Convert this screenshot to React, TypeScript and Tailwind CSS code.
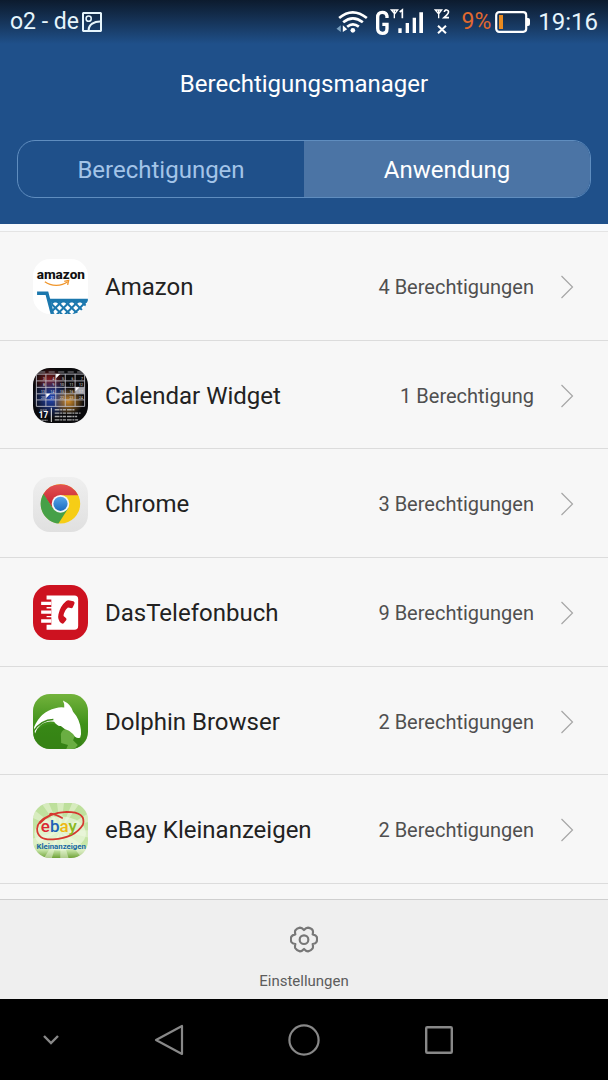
import { useState } from 'react';
import type { ReactNode } from 'react';

type AppRow = { name: string; permissions: number; icon: ReactNode };

function AmazonIcon() {
  return (
    <svg viewBox="0 0 162 162" className="size-full" aria-hidden="true">
      <defs>
        <clipPath id="amazon-basket">
          <path d="M51 117h111v45H60z" />
        </clipPath>
      </defs>
      <rect width="162" height="162" fill="#fff" />
      <text x="82" y="60" textAnchor="middle" fontSize="40" fontWeight="800" fill="#111">
        amazon
      </text>
      <path d="M35 67c18 14 49 14 67 0" fill="none" stroke="#f0962c" strokeWidth="4" />
      <path d="M92 66l13-3-3 13" fill="none" stroke="#f0962c" strokeWidth="4" />
      <path d="M12 101h29l16 61" fill="none" stroke="#1c78ae" strokeWidth="10" />
      <path d="M48 117h114v11H51z" fill="#1c78ae" />
      <g clipPath="url(#amazon-basket)" stroke="#1c78ae" strokeWidth="6">
        <path d="M18 120l48 48M42 120l48 48M66 120l48 48M90 120l48 48M114 120l48 48M138 120l48 48" />
        <path d="M66 120l-48 48M90 120l-48 48M114 120l-48 48M138 120l-48 48M162 120l-48 48M186 120l-48 48" />
      </g>
    </svg>
  );
}

function CalendarIcon() {
  const days = [3, 4, 5, 6, 7, 8, 9, 10, 11, 12, 13, 14, 15, 16, 17, 20, 21, 22, 23, 24];
  return (
    <svg viewBox="0 0 162 162" className="size-full" aria-hidden="true">
      <defs>
        <radialGradient id="cal-blue">
          <stop offset="0" stopColor="#2448b8" />
          <stop offset="1" stopColor="#2448b8" stopOpacity="0" />
        </radialGradient>
        <radialGradient id="cal-red">
          <stop offset="0" stopColor="#8c1c1c" />
          <stop offset="1" stopColor="#8c1c1c" stopOpacity="0" />
        </radialGradient>
        <radialGradient id="cal-gold">
          <stop offset="0" stopColor="#d08c2c" />
          <stop offset="1" stopColor="#d08c2c" stopOpacity="0" />
        </radialGradient>
      </defs>
      <rect width="162" height="162" fill="#0a0a0c" />
      <ellipse cx="48" cy="36" rx="46" ry="36" fill="url(#cal-red)" />
      <ellipse cx="54" cy="88" rx="56" ry="60" fill="url(#cal-blue)" />
      <ellipse cx="104" cy="98" rx="46" ry="40" fill="url(#cal-gold)" />
      <path
        d="M10 18h142M10 38h142M10 57h142M10 76h142M10 94h142M10 113h142M10 18v95M38 18v95M67 18v95M95 18v95M124 18v95M152 18v95"
        fill="none"
        stroke="#c4c4ce"
        strokeWidth="2.5"
      />
      <rect x="125" y="57" width="27" height="19" fill="#a8a8ae" />
      <path d="M68 18h12l-12 12zM39 76h12l-12 12zM125 57h12l-12 12z" fill="#fff" />
      {days.map((day, i) => (
        <text
          key={day}
          x={35 + (i % 5) * 28}
          y={35 + Math.floor(i / 5) * 19}
          textAnchor="end"
          fontSize="10"
          fill="#e4e4e8"
        >
          {day}
        </text>
      ))}
      <path d="M18 12h18M46 12h18M74 12h18M102 12h18M130 12h16" stroke="#85858c" strokeWidth="3" />
      <text x="31" y="146" textAnchor="middle" fontSize="24" fontWeight="700" fill="#fff">
        17
      </text>
      <path d="M21 124h20M19 154h24" stroke="#a0a0a4" strokeWidth="3" strokeDasharray="6 1" />
      <path d="M54 117v42" stroke="#e4e4e4" strokeWidth="3" />
      <path
        d="M64 123h60M64 133h76M64 143h66M64 153h72"
        stroke="#a8a8a8"
        strokeWidth="4"
        strokeDasharray="14 2 6 2 9 3"
      />
    </svg>
  );
}

function ChromeIcon() {
  return (
    <svg viewBox="0 0 162 162" className="size-full" aria-hidden="true">
      <defs>
        <linearGradient id="chrome-bg" x2="0" y2="1">
          <stop stopColor="#efefef" />
          <stop offset="1" stopColor="#e0e0e0" />
        </linearGradient>
        <linearGradient id="chrome-red" x2="0" y2="1">
          <stop stopColor="#e35252" />
          <stop offset="1" stopColor="#c4202c" />
        </linearGradient>
        <linearGradient id="chrome-blue" x2="0" y2="1">
          <stop stopColor="#56a5e8" />
          <stop offset="1" stopColor="#1b6cc0" />
        </linearGradient>
      </defs>
      <rect width="162" height="162" fill="url(#chrome-bg)" />
      <circle cx="81" cy="79" r="58" fill="#f6cd16" />
      <path d="M30 51a58 58 0 0 1 103 3H81L58 91z" fill="url(#chrome-red)" />
      <path d="M31 49a58 58 0 0 0 44 88l29-45-46-1z" fill="#46a047" />
      <circle cx="81" cy="79" r="26" fill="#f4f6f7" />
      <circle cx="81" cy="79" r="21" fill="url(#chrome-blue)" />
    </svg>
  );
}

function PhonebookIcon() {
  return (
    <svg viewBox="0 0 162 162" className="size-full" aria-hidden="true">
      <rect width="162" height="162" fill="#cd1220" />
      <path d="M40 31h82q11 0 11 11v79q0 11-11 11H40z" fill="#fff" />
      <path d="M36 43h18v22H36zM36 69h18v22H36zM36 95h18v22H36z" fill="#cd1220" />
      <path d="M24 49h30v10H24zM24 75h30v10H24zM24 101h30v10H24z" fill="#fff" />
      <path
        d="M104 45l15 3q5 2 3 7l-5 11q-2 3-6 2l-8-2q-12 10-13 25l7 6q3 3 1 6l-7 9q-3 4-7 1-13-10-9-27 5-24 23-39 3-2 6-2z"
        fill="#cd1220"
      />
    </svg>
  );
}

function DolphinIcon() {
  return (
    <svg viewBox="0 0 162 162" className="size-full" aria-hidden="true">
      <defs>
        <linearGradient id="dolphin-bg" x2="0" y2="1">
          <stop stopColor="#73b33c" />
          <stop offset="0.55" stopColor="#3f911a" />
          <stop offset="1" stopColor="#3b8618" />
        </linearGradient>
      </defs>
      <rect width="162" height="162" fill="url(#dolphin-bg)" />
      <path d="M0 120q30-38 70-30 50 8 73 48v24H0z" fill="#2f7d12" opacity="0.5" />
      <path d="M82 118q4-16 22-16 14 4 20 20l-6 14 14 14-10 12H98l5-12-20-6z" fill="#6aae42" />
      <path
        d="M3 98Q22 52 66 42q14-4 26-2 2-10-4-21 24 11 30 33 20 22 23 53 2 13-2 23-7 4-15-2-6-10-18-18-14-4-24-14-10 2-20-12-22-4-40 10Q10 102 6 116z"
        fill="#fff"
      />
      <path d="M2 109q22-33 58-34" fill="none" stroke="#3e8b1b" strokeWidth="4" />
    </svg>
  );
}

function EbayIcon() {
  return (
    <svg viewBox="0 0 162 162" className="size-full" aria-hidden="true">
      <defs>
        <linearGradient id="ebay-bg" x2="0" y2="1">
          <stop stopColor="#bddf9b" />
          <stop offset="0.85" stopColor="#c9e7aa" />
          <stop offset="1" stopColor="#6fa238" />
        </linearGradient>
      </defs>
      <rect width="162" height="162" fill="url(#ebay-bg)" />
      <path
        d="M81 81L-10 10v30zM81 81L10-20h28zM81 81L68-20h26zM81 81L124-20h28zM81 81L180 20v30zM81 81L180 80v26zM81 81L170 140l-20 30zM81 81L110 180H80zM81 81L50 180H22zM81 81L-20 140v-30z"
        fill="#eff8df"
        opacity="0.5"
      />
      <ellipse cx="80" cy="90" rx="76" ry="50" fill="#f2fae6" opacity="0.6" />
      <path
        d="M86 44Q47 24 50 36q-37 16-38 40 0 34 47 31 64-4 88-43 11-38-48-38Q45 29 21 59"
        fill="none"
        stroke="#d6372f"
        strokeWidth="5"
        strokeLinecap="round"
      />
      <text x="23" y="86" fontSize="50" fontWeight="500">
        <tspan fill="#dc2833">e</tspan>
        <tspan fill="#1d62b7">b</tspan>
        <tspan fill="#efb710">a</tspan>
        <tspan fill="#8bb820">y</tspan>
      </text>
      <text x="83" y="135" textAnchor="middle" fontSize="23" fontWeight="700" fill="#1768a4">
        Kleinanzeigen
      </text>
    </svg>
  );
}

const apps: AppRow[] = [
  { name: 'Amazon', permissions: 4, icon: <AmazonIcon /> },
  { name: 'Calendar Widget', permissions: 1, icon: <CalendarIcon /> },
  { name: 'Chrome', permissions: 3, icon: <ChromeIcon /> },
  { name: 'DasTelefonbuch', permissions: 9, icon: <PhonebookIcon /> },
  { name: 'Dolphin Browser', permissions: 2, icon: <DolphinIcon /> },
  { name: 'eBay Kleinanzeigen', permissions: 2, icon: <EbayIcon /> },
];

function StatusBar() {
  return (
    <div className="flex h-11 items-center justify-between bg-linear-to-b from-[#0c1b2e] to-[#1f508a] px-2.5 text-[#e6f5fc]">
      <div className="flex items-center gap-[3px] text-[23px]">
        <span>o2 - de</span>
        <svg viewBox="0 0 21 21" className="size-5" fill="none" stroke="currentColor" strokeWidth="2.2">
          <rect x="1" y="1" width="19" height="19" rx="1" />
          <circle cx="7" cy="7" r="2.7" strokeWidth="1.6" />
          <path d="M7 19c0-6 6-9 12-9" />
        </svg>
      </div>
      <div className="flex items-center">
        <svg viewBox="50 24 98 78" className="mr-1.5 h-[26px] w-[33px]" fill="none" stroke="#fff" strokeWidth="8">
          <path d="M59 51Q99 17 142 51M71 64Q100 40 130 64M83 77Q100 63 118 77" />
          <circle cx="100" cy="88" r="7" fill="#fff" stroke="none" />
          <path d="M70 73v20l13-8z" fill="#fff" stroke="none" />
          <path d="M64 73v20l-13-10z" fill="#7aa0bf" stroke="none" />
        </svg>
        <svg viewBox="165 21 147 84" className="h-7 w-[49px]">
          <path
            d="M201 51v-6q-2-11-14-11-14 0-14 15v33q0 15 14 15 14 0 14-14V70h-14"
            fill="none"
            stroke="#fff"
            strokeWidth="10"
          />
          <path d="M214 27h19l-9 12zM223 27v25" fill="none" stroke="#fff" strokeWidth="4" />
          <path d="M239 33l8-6v25" fill="none" stroke="#fff" strokeWidth="5" />
          <path d="M235 82h10v14h-10zM257 66h10v30h-10zM278 50h10v46h-10zM298 34h11v62h-11z" fill="#fff" />
        </svg>
        <svg viewBox="342 21 51 84" className="ml-2.5 h-7 w-[17px]" fill="none" stroke="#fff">
          <path d="M346 27h19l-9 12zM356 27v25" strokeWidth="4" />
          <path d="M373 33q1-7 7-6 7 1 5 8-1 4-13 15h15" strokeWidth="5" />
          <path d="M354 74l24 23M378 74l-24 23" strokeWidth="6" />
        </svg>
        <span className="ml-2.5 text-[23px] text-[#e0692f]">9%</span>
        <svg viewBox="0 0 35 22" className="ml-1 h-[22px] w-[35px]">
          <rect x="1.2" y="1.2" width="30" height="19.6" rx="3" fill="none" stroke="#fff" strokeWidth="2.2" />
          <path d="M32 7h1q2 0 2 2v4q0 2-2 2h-1z" fill="#fff" />
          <rect x="4" y="4" width="4" height="14" fill="#e88a20" />
        </svg>
        <span className="ml-2 text-2xl">19:16</span>
      </div>
    </div>
  );
}

function NavBar() {
  return (
    <nav className="flex h-[81px] items-center bg-black pr-[101px] text-[#888]">
      <button aria-label="Ausblenden" className="flex w-[101px] justify-center">
        <svg viewBox="0 0 16 10" className="h-2.5 w-4" fill="none" stroke="currentColor" strokeWidth="2.4">
          <path d="M1 1l7 7 7-7" />
        </svg>
      </button>
      <button aria-label="Zurück" className="flex flex-1 justify-center">
        <svg viewBox="0 0 30 32" className="h-8 w-[30px]" fill="none" stroke="currentColor" strokeWidth="2.2" strokeLinejoin="round">
          <path d="M28 2v28L2 16z" />
        </svg>
      </button>
      <button aria-label="Startseite" className="flex flex-1 justify-center">
        <svg viewBox="0 0 32 32" className="size-8" fill="none" stroke="currentColor" strokeWidth="2.2">
          <circle cx="16" cy="16" r="14.6" />
        </svg>
      </button>
      <button aria-label="Letzte Apps" className="flex flex-1 justify-center">
        <svg viewBox="0 0 28 28" className="size-7" fill="none" stroke="currentColor" strokeWidth="2.4">
          <rect x="1.2" y="1.2" width="25.6" height="25.6" rx="1" />
        </svg>
      </button>
    </nav>
  );
}

export default function App() {
  const [tab, setTab] = useState('Anwendung');

  return (
    <div className="flex min-h-screen flex-col bg-[#f7f7f7] font-['Roboto',sans-serif]">
      <header className="bg-[#1f508a] pb-[26px]">
        <StatusBar />
        <h1 className="pt-5 text-center text-2xl leading-10 text-white">Berechtigungsmanager</h1>
        <div
          role="tablist"
          className="mx-[17px] mt-9 flex h-[58px] overflow-hidden rounded-[18px] border border-[#5f8dbf]"
        >
          {['Berechtigungen', 'Anwendung'].map((label) => (
            <button
              key={label}
              role="tab"
              aria-selected={tab === label}
              onClick={() => setTab(label)}
              className={
                tab === label
                  ? 'flex-1 bg-[#4b74a5] pt-0.5 text-2xl text-white'
                  : 'flex-1 pt-0.5 text-2xl text-[#a3c4e8]'
              }
            >
              {label}
            </button>
          ))}
        </div>
      </header>

      <main className="flex flex-1 flex-col pb-[15px]">
        <div className="h-2 border-b border-[#e4e4e4] bg-[#f8fafc]" />
        <ul className="flex flex-1 flex-col">
          {apps.map((app) => (
            <li key={app.name} className="flex flex-1 border-b border-[#dcdcdc]">
              <button className="flex flex-1 items-center pt-[18px] pr-[34px] pb-4 pl-[33px] text-left">
                <span className="size-[55px] shrink-0 overflow-hidden rounded-[17px]">{app.icon}</span>
                <span className="ml-[17px] flex-1 text-2xl text-[#222]">{app.name}</span>
                <span className="text-xl text-[#4f4f4f]">
                  {app.permissions} {app.permissions === 1 ? 'Berechtigung' : 'Berechtigungen'}
                </span>
                <svg viewBox="0 0 14 24" className="ml-[26px] h-6 w-3.5" fill="none" stroke="#a6a6a6" strokeWidth="1.2">
                  <path d="M1.5 1l11 11-11 11" />
                </svg>
              </button>
            </li>
          ))}
        </ul>
      </main>

      <footer className="flex h-[100px] justify-center border-t border-[#cfcfcf] bg-[#efefef]">
        <button className="flex flex-col items-center px-6 pt-[26px] text-[#5c5c5c]">
          <svg viewBox="0 0 84 84" className="size-7" fill="none" stroke="#777" strokeWidth="6.5" strokeLinejoin="round">
            <path d="M30 5q6 0 12 7 6-7 12-7 11 2 14 8 2 4 0 12 10 2 12 7 3 10-1 17-2 4-11 5 2 9 0 13-5 7-14 9-6 0-12-7-6 7-12 7-10-2-14-9-2-4 0-13-9-1-12-6-3-8 0-16 3-5 12-7-2-8 0-12 4-6 14-8z" />
            <circle cx="42" cy="41" r="13" />
          </svg>
          <span className="mt-[15px] text-[15px] leading-6">Einstellungen</span>
        </button>
      </footer>

      <NavBar />
    </div>
  );
}
